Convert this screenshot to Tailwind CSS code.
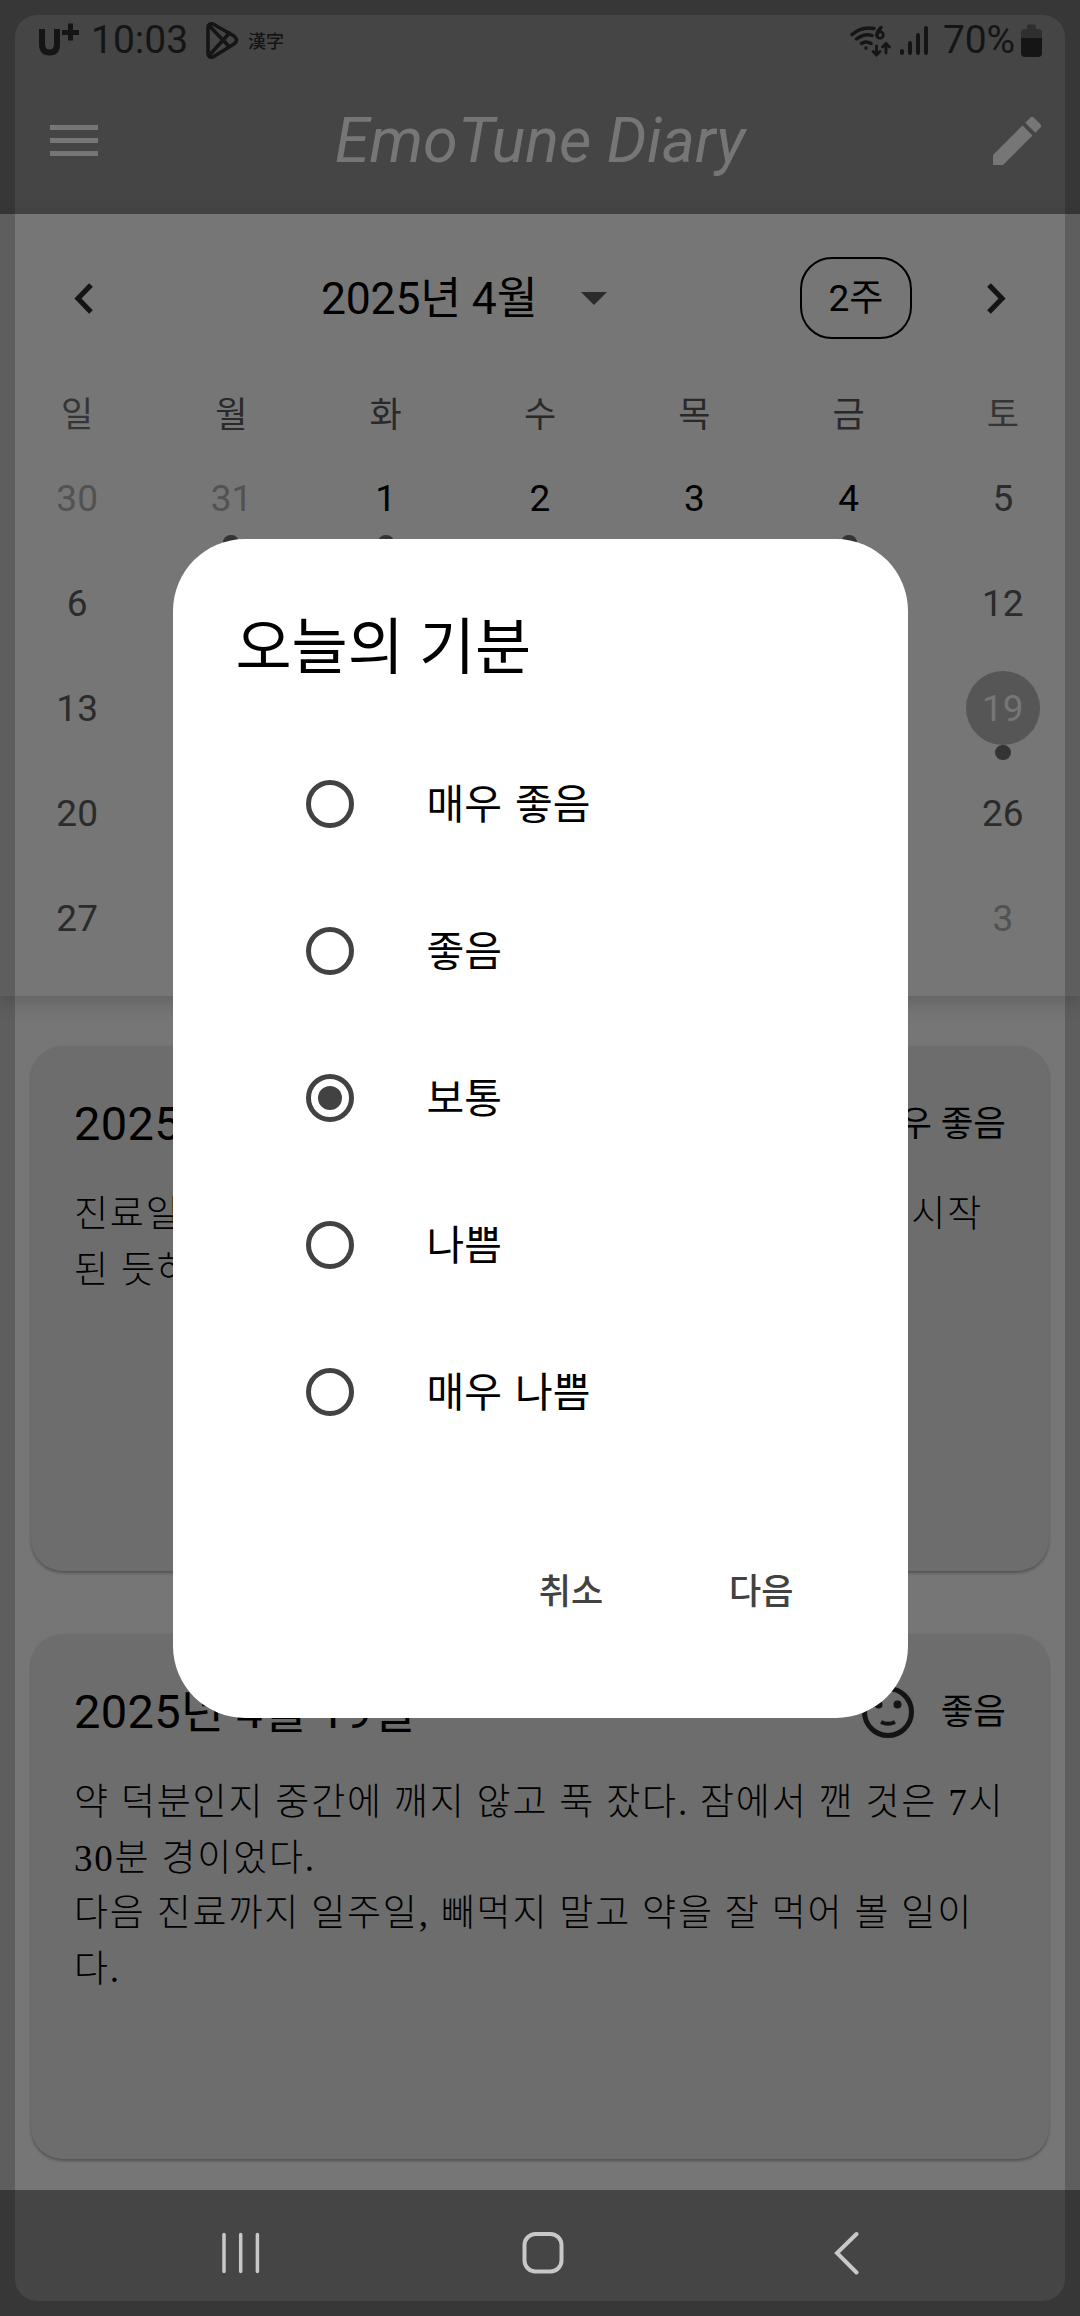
<!DOCTYPE html>
<html lang="ko">
<head>
<meta charset="utf-8">
<title>EmoTune Diary</title>
<script src="https://cdn.jsdelivr.net/npm/@tailwindcss/browser@4"></script>
</head>
<body class="w-[1080px] h-[2316px] overflow-hidden">
<div class="relative w-[1080px] h-[2316px] overflow-hidden flex flex-col bg-[#767676] text-black font-[Roboto,'Noto_Sans_CJK_KR',sans-serif]">

  <!-- Status bar -->
  <div class="h-[80px] shrink-0 bg-[#454545] flex items-center pl-[38px] pr-[37px] text-[#151515] leading-none">
    <svg class="w-[42px] h-[36px]" viewBox="38 22 42 36" fill="none" stroke="currentColor"><path d="M42 29v15q0 8.500 7.500 8.500T57 44V29" stroke-width="6"/><path d="M62 32.500h17M70.500 23.500v17" stroke-width="5"/></svg>
    <span class="ml-[11px] w-[97px] text-[39px] whitespace-nowrap">10:03</span>
    <svg class="ml-[16px] w-[36px] h-[40px]" viewBox="204 20 36 40" fill="none" stroke="currentColor" stroke-width="3.600" stroke-linejoin="round" stroke-linecap="round"><path d="M208 28q0-5 5-4l21 12q5 4.500 0 8l-21 13q-5 1-5-4zM209.500 26l20 21M209.500 55l20-22"/></svg>
    <span class="ml-[8px] text-[18px] font-medium font-['Noto_Sans_CJK_JP',sans-serif]">漢字</span>
    <span class="grow"></span>
    <svg class="w-[42px] h-[36px]" viewBox="850 22 42 36" fill="none" stroke="currentColor" stroke-width="3.400" stroke-linecap="round"><path d="M852 34.500q10-8.500 22-6M856.500 39q8-6 15.500-3.500M861.500 43.500q4.500-3 9.500 0M866 48v.300M881 27.500q-4 4-4 8"/><circle cx="880" cy="35" r="3.300" stroke-width="2.800"/><path d="M876.500 46v8.500M873 51.500l3.500 3.500 3.500-3.500M886 53v-9M882.500 47l3.500-3.500 3.500 3.500" stroke-width="2.800"/></svg>
    <svg class="ml-[7px] w-[30px] h-[36px]" viewBox="899 22 30 36" stroke="currentColor" stroke-width="4" stroke-linecap="round"><path d="M902 51v2M910 43v10M918 35v18M926 28v25"/></svg>
    <span class="ml-[14px] w-[72px] text-[39px] whitespace-nowrap tracking-[-0.200px]">70%</span>
    <svg class="ml-[6px] w-[22px] h-[36px]" viewBox="1021 22 22 36"><path d="M1027 26q0-1.500 1.500-1.500h6q1.500 0 1.500 1.500v3h2q4 0 4 4v6h-21v-6q0-4 4-4h2z" fill="#2f2f2f"/><path d="M1021 38h21v15q0 4-4 4h-13q-4 0-4-4z" fill="currentColor"/></svg>
  </div>

  <!-- App bar -->
  <div class="h-[134px] shrink-0 bg-[#454545] text-[#767676] flex items-start justify-between pl-[50px] pr-[39px]">
    <div class="flex flex-col gap-[8px] mt-[45px]"><i class="block w-[48px] h-[5px] bg-current"></i><i class="block w-[48px] h-[5px] bg-current"></i><i class="block w-[48px] h-[5px] bg-current"></i></div>
    <h1 class="mt-[24px] ml-[-11px] text-[63px] leading-[74px] italic whitespace-nowrap">EmoTune Diary</h1>
    <svg class="mt-[37px] w-[48px] h-[48px]" viewBox="3 3 18 18" fill="currentColor"><path d="M3 17.250V21h3.750L17.810 9.940l-3.750-3.750L3 17.250zM20.710 7.040a1 1 0 0 0 0-1.410l-2.340-2.340a1 1 0 0 0-1.410 0l-1.830 1.830 3.750 3.750 1.830-1.830z"/></svg>
  </div>

  <!-- Calendar -->
  <section class="h-[782px] shrink-0 bg-[#767676] shadow-[0_6px_18px_rgba(0,0,0,0.18)] relative">
    <div class="flex items-center pt-[43px] pl-[74px] pr-[74px] h-[125px]">
      <svg class="w-[19px] h-[31px]" viewBox="0 0 19 31" fill="none" stroke="#141414" stroke-width="5.200"><path d="M17 2L4 15.500 17 29"/></svg>
      <span class="ml-[228px] mt-[2px] w-[215px] text-[44.500px] leading-[54px] whitespace-nowrap tracking-[-0.200px]">2025년 4월</span>
      <svg class="ml-[45px] w-[26px] h-[13px]" viewBox="0 0 26 13" fill="#2b2b2b"><path d="M0 0h26L13 13z"/></svg>
      <span class="ml-[193px] w-[112px] h-[82px] border-2 border-black rounded-[32px] flex items-center justify-center text-[37px] leading-none">2주</span>
      <span class="grow"></span>
      <svg class="w-[19px] h-[31px]" viewBox="0 0 19 31" fill="none" stroke="#141414" stroke-width="5.200"><path d="M2 2l13 13.500L2 29"/></svg>
    </div>
    <div class="grid grid-cols-7 justify-items-center mt-[50px] h-[56px] text-[35px] leading-[54px] text-[#292929]">
      <span class="text-[#353535]">일</span><span>월</span><span>화</span><span>수</span><span>목</span><span>금</span><span class="text-[#353535]">토</span>
    </div>
    <div class="grid grid-cols-7 auto-rows-[105px] justify-items-center text-[37px]">
      <div class="flex flex-col items-center w-[74px] text-[#525252]"><span class="h-[74px] leading-[76px] mt-[16px]">30</span></div>
      <div class="flex flex-col items-center w-[74px] text-[#525252]"><span class="h-[74px] leading-[76px] mt-[16px]">31</span><i class="block size-4 rounded-full bg-[#343434]"></i></div>
      <div class="flex flex-col items-center w-[74px]"><span class="h-[74px] leading-[76px] mt-[16px]">1</span><i class="block size-4 rounded-full bg-[#343434]"></i></div>
      <div class="flex flex-col items-center w-[74px]"><span class="h-[74px] leading-[76px] mt-[16px]">2</span></div>
      <div class="flex flex-col items-center w-[74px]"><span class="h-[74px] leading-[76px] mt-[16px]">3</span></div>
      <div class="flex flex-col items-center w-[74px]"><span class="h-[74px] leading-[76px] mt-[16px]">4</span><i class="block size-4 rounded-full bg-[#343434]"></i></div>
      <div class="flex flex-col items-center w-[74px] text-[#2b2b2b]"><span class="h-[74px] leading-[76px] mt-[16px]">5</span></div>

      <div class="flex flex-col items-center w-[74px] text-[#2b2b2b]"><span class="h-[74px] leading-[76px] mt-[16px]">6</span></div>
      <div class="col-start-7 flex flex-col items-center w-[74px] text-[#2b2b2b]"><span class="h-[74px] leading-[76px] mt-[16px]">12</span></div>

      <div class="flex flex-col items-center w-[74px] text-[#2b2b2b]"><span class="h-[74px] leading-[76px] mt-[16px]">13</span></div>
      <div class="col-start-7 flex flex-col items-center w-[74px] text-[#767676]"><span class="h-[74px] w-[74px] rounded-full bg-[#565656] text-center leading-[76px] mt-[16px]">19</span><i class="block size-4 rounded-full bg-[#343434]"></i></div>

      <div class="flex flex-col items-center w-[74px] text-[#2b2b2b]"><span class="h-[74px] leading-[76px] mt-[16px]">20</span></div>
      <div class="col-start-7 flex flex-col items-center w-[74px] text-[#2b2b2b]"><span class="h-[74px] leading-[76px] mt-[16px]">26</span></div>

      <div class="flex flex-col items-center w-[74px] text-[#2b2b2b]"><span class="h-[74px] leading-[76px] mt-[16px]">27</span></div>
      <div class="col-start-7 flex flex-col items-center w-[74px] text-[#525252]"><span class="h-[74px] leading-[76px] mt-[16px]">3</span></div>
    </div>
  </section>

  <!-- Diary entries -->
  <main class="grow flex flex-col gap-[63px] px-[31px] pt-[50px]">
    <article class="h-[525px] shrink-0 rounded-[32px] bg-[#6d6d6d] shadow-[0_2px_3px_rgba(0,0,0,0.3)] pl-[43px] pr-[43px] pt-[45px]">
      <header class="h-[66px] flex items-center justify-between">
        <h2 class="text-[47px] leading-[60px] whitespace-nowrap tracking-[0.300px]">2025년 4월 19일</h2>
        <span class="text-[35.500px] leading-[54px] whitespace-nowrap word-spacing-[2px]">매우 좋음</span>
      </header>
      <div class="mt-[30px] text-[37px] leading-[55.500px] font-light font-['Liberation_Serif','Noto_Sans_CJK_KR',serif]">
        <div class="flex justify-between pr-[23px]"><span class="tracking-[1.800px]">진료일</span><span class="tracking-[1.800px]">시작</span></div>
        <div class="tracking-[1.800px]">된 듯하</div>
      </div>
    </article>
    <article class="h-[525px] shrink-0 rounded-[32px] bg-[#6d6d6d] shadow-[0_2px_3px_rgba(0,0,0,0.3)] pl-[43px] pr-[43px] pt-[45px]">
      <header class="h-[66px] flex items-center">
        <h2 class="text-[47px] leading-[60px] whitespace-nowrap grow tracking-[0.300px]">2025년 4월 19일</h2>
        <svg class="w-[54px] h-[54px] mr-[26px]" viewBox="0 0 54 54" fill="none" stroke="#141414" stroke-width="5"><circle cx="27" cy="27" r="23.500"/><circle cx="17.500" cy="19.500" r="4" fill="#141414" stroke="none"/><circle cx="36.500" cy="19.500" r="4" fill="#141414" stroke="none"/><path d="M20 37q7 3.500 14 0" stroke-width="4"/></svg>
        <span class="text-[35.500px] leading-[54px] whitespace-nowrap">좋음</span>
      </header>
      <div class="mt-[30px] text-[37px] leading-[55.500px] font-light whitespace-nowrap font-['Liberation_Serif','Noto_Sans_CJK_KR',serif]">
        <div class="tracking-[1.800px]">약 덕분인지 중간에 깨지 않고 푹 잤다. 잠에서 깬 것은 7시</div>
        <div class="tracking-[1.800px]">30분 경이었다.</div>
        <div class="tracking-[1.800px]">다음 진료까지 일주일, 빼먹지 말고 약을 잘 먹어 볼 일이</div>
        <div class="tracking-[1.800px]">다.</div>
      </div>
    </article>
  </main>

  <!-- System navigation -->
  <nav class="h-[126px] shrink-0 bg-[#454545] flex items-start pt-[41px] pl-[222px] text-[#c8c8c8]">
    <svg class="w-[38px] h-[44px]" viewBox="0 0 38 44" stroke="currentColor" stroke-width="3.500" stroke-linecap="round"><path d="M2 3.500v37M18.700 3.500v37M35.400 3.500v37"/></svg>
    <svg class="ml-[262px] w-[42px] h-[44px]" viewBox="0 0 42 44" fill="none" stroke="currentColor" stroke-width="4"><rect x="2.500" y="3" width="37" height="37.500" rx="11"/></svg>
    <svg class="ml-[269px] w-[26px] h-[44px]" viewBox="0 0 26 44" fill="none" stroke="currentColor" stroke-width="4" stroke-linecap="round"><path d="M23.500 3L4 22l19.500 19.500"/></svg>
  </nav>

  <!-- Edge frame -->
  <div class="absolute inset-[15px] rounded-[22px] shadow-[0_0_0_40px_rgba(0,0,0,0.2)]"></div>

  <!-- Mood dialog -->
  <div role="dialog" class="absolute left-[172.500px] top-[539px] w-[735px] h-[1179px] rounded-[72px] bg-white flex flex-col">
    <h2 class="mt-[64px] ml-[63px] h-[88px] text-[61px] leading-[90px]">오늘의 기분</h2>
    <ul class="mt-[39px] ml-[133px] text-[41px] leading-[60px] [word-spacing:3px]">
      <li class="h-[147px] flex items-center gap-[73px]"><i class="block size-[48px] rounded-full border-5 border-[#424242]"></i><span class="pt-[3px]">매우 좋음</span></li>
      <li class="h-[147px] flex items-center gap-[73px]"><i class="block size-[48px] rounded-full border-5 border-[#424242]"></i><span class="pt-[3px]">좋음</span></li>
      <li class="h-[147px] flex items-center gap-[73px]"><i class="flex items-center justify-center size-[48px] rounded-full border-5 border-[#424242]"><b class="block size-[24px] rounded-full bg-[#424242]"></b></i><span class="pt-[3px]">보통</span></li>
      <li class="h-[147px] flex items-center gap-[73px]"><i class="block size-[48px] rounded-full border-5 border-[#424242]"></i><span class="pt-[3px]">나쁨</span></li>
      <li class="h-[147px] flex items-center gap-[73px]"><i class="block size-[48px] rounded-full border-5 border-[#424242]"></i><span class="pt-[3px]">매우 나쁨</span></li>
    </ul>
    <div class="mt-[92px] mr-[114px] flex justify-end gap-[126px] text-[35px] leading-[72px] font-medium text-[#424242]">
      <button>취소</button><button>다음</button>
    </div>
  </div>
</div>
</body>
</html>
